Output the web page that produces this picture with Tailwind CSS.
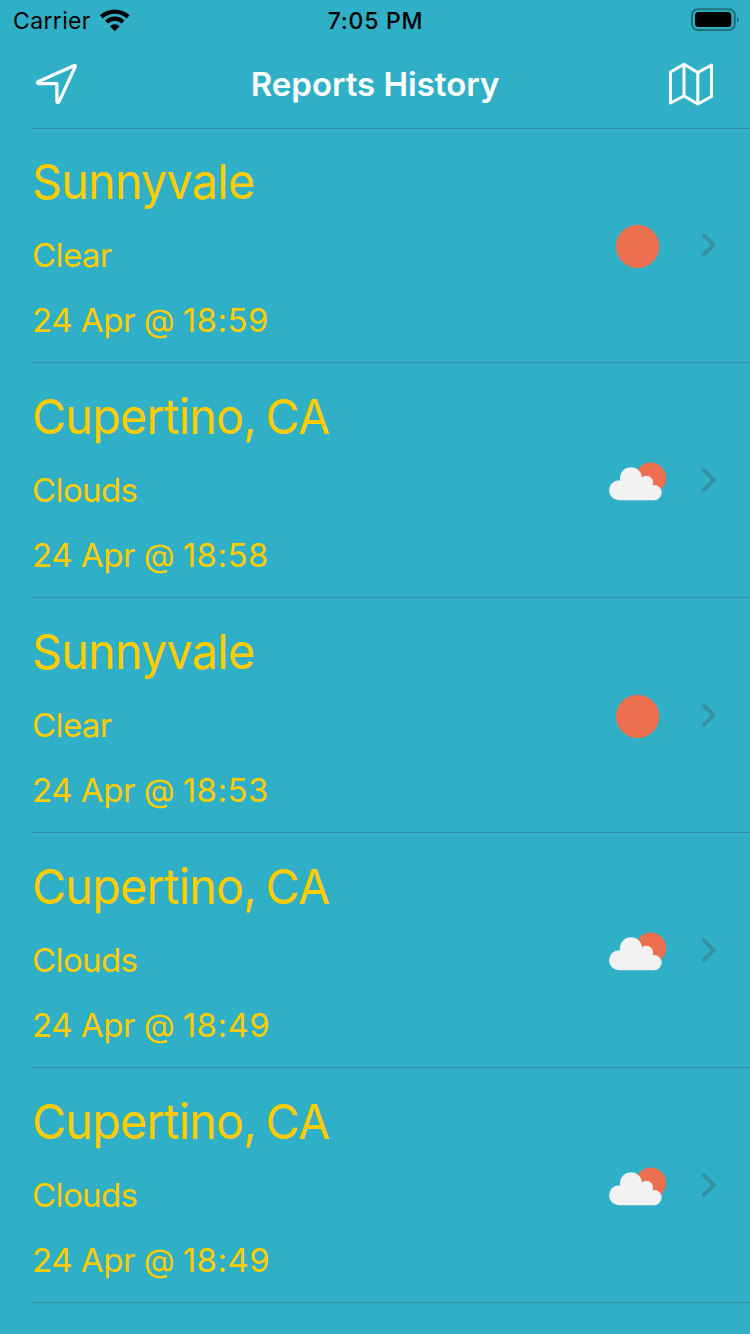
<!DOCTYPE html>
<html lang="en">
<head>
<meta charset="utf-8">
<title>Reports History</title>
<script src="https://cdn.jsdelivr.net/npm/@tailwindcss/browser@4"></script>
</head>
<body class="w-[750px] h-[1334px] overflow-hidden bg-[#30b0c7] font-['Inter','Liberation_Sans',sans-serif]">
<svg class="hidden">
  <symbol id="chevron" viewBox="0 0 18 28"><path d="M3.700 3.200 13.800 13 3.700 22.900" fill="none" stroke="#398fa2" stroke-width="3.700" stroke-linecap="round"/></symbol>
  <symbol id="sun" viewBox="0 0 60 44"><circle cx="29.500" cy="22.500" r="21.700" fill="#ec704f"/></symbol>
  <symbol id="clouds" viewBox="0 0 60 44"><circle cx="42.700" cy="19" r="15.400" fill="#ec704f"/><g fill="#f1f2f1"><circle cx="11" cy="31.300" r="10"/><circle cx="23" cy="19.200" r="11"/><circle cx="38.300" cy="23.600" r="6.800"/><circle cx="46" cy="33.600" r="7.700"/><path d="M11 41.300V30L23 20 38 22 46 30V41.300Z"/></g></symbol>
</svg>
<header class="h-[129px] flex flex-col">
  <div class="h-10 grid grid-cols-3 items-start text-black">
    <div class="flex items-start pl-[13px] gap-[9px]">
      <span class="text-[23px] leading-10 tracking-[0.35px] mt-px">Carrier</span>
      <svg class="w-[30px] h-[23px] mt-[9px]" viewBox="0 0 30 23"><path d="M0 6.300A21.700 21.700 0 0 1 29.600 6.300L26.700 9.500A17 17 0 0 0 2.900 9.500ZM5.100 11.700A13.500 13.500 0 0 1 24.500 11.700L21.500 14.500A9.500 9.500 0 0 0 8.100 14.500ZM9.900 17.200A7 7 0 0 1 19.700 17.200L14.800 22.300Z"/></svg>
    </div>
    <div class="text-center text-[23px] leading-10 font-medium tracking-[0.75px] pl-px mt-px">7:05 PM</div>
    <svg class="w-[48px] h-[24px] justify-self-end mr-[11px] mt-[8px]" viewBox="0 0 48 24"><rect x="1" y="1.200" width="42.800" height="20.800" rx="6" fill="none" stroke="#1f7180" stroke-width="2"/><rect x="4" y="4" width="36.300" height="15" rx="3.500"/><path d="M46 8q3.500 3.500 0 7Z" fill="#1f7180"/></svg>
  </div>
  <div class="h-[88px] flex items-center justify-between px-[34px] text-white">
    <svg class="w-[46px] h-[46px]" viewBox="0 1 46 46"><path d="M40.400 5.500 4 21.700Q2.500 23 4.200 23.600H22.900V41.500Q23.800 43.600 25.200 41.300L41.300 6.500Q41.400 5.200 40.400 5.500Z" fill="none" stroke="white" stroke-width="3.200" stroke-linejoin="round"/></svg>
    <h1 class="text-[33px] leading-[40px] font-semibold pl-1">Reports History</h1>
    <svg class="w-[50px] h-[46px]" viewBox="0 0.500 50 46" fill="none" stroke="white" stroke-linejoin="round" stroke-linecap="round"><path d="M4.500 11.500 18 3.800 31.800 12 45.500 4.500V36L31.800 43.500 18 35.500 4.500 42.500Z" stroke-width="3"/><path d="M18 4V35.500M31.800 12V43" stroke-width="3"/></svg>
  </div>
  <div class="ml-8 h-px shrink-0 bg-[#348da1]"></div>
</header>
<main id="list" class="-mt-px text-[#ffcc00]"></main>
<template id="row">
  <article class="h-[235px] flex flex-col">
    <div class="flex-1 flex justify-between pl-8">
      <div class="flex flex-col items-start pt-[24px]">
        <h2 class="text-[48.5px] leading-[60px] tracking-[-0.7px] [word-spacing:-3px] whitespace-nowrap origin-left scale-x-[0.96]"></h2>
        <p class="mt-[23px] text-[33px] leading-[40px] tracking-[-0.6px]"></p>
        <p class="mt-[25px] text-[33px] leading-[40px] tracking-[-0.45px]"><time></time> <span class="text-[32px] tracking-[-0.8px] [font-feature-settings:'calt'_0]">@</span> <time class="tracking-[0.45px]"></time></p>
      </div>
      <div class="flex items-start pt-[96px] pr-[32px]">
        <svg class="w-[60px] h-[44px] mr-[32px]"><use/></svg>
        <svg class="w-[18px] h-[28px] mt-[8px]"><use href="#chevron"/></svg>
      </div>
    </div>
    <div class="ml-8 h-px bg-[#348da1]"></div>
  </article>
</template>
<script>
const reports = [
  ["Sunnyvale", "Clear", "24 Apr", "18:59"],
  ["Cupertino, CA", "Clouds", "24 Apr", "18:58"],
  ["Sunnyvale", "Clear", "24 Apr", "18:53"],
  ["Cupertino, CA", "Clouds", "24 Apr", "18:49"],
  ["Cupertino, CA", "Clouds", "24 Apr", "18:49"]
];
for (const [city, sky, day, hour] of reports) {
  const row = document.getElementById("row").content.cloneNode(true);
  row.querySelector("h2").textContent = city;
  row.querySelector("p").textContent = sky;
  const times = row.querySelectorAll("time");
  times[0].textContent = day;
  times[1].textContent = hour;
  row.querySelector("use").setAttribute("href", sky === "Clear" ? "#sun" : "#clouds");
  document.getElementById("list").append(row);
}
</script>
</body>
</html>
